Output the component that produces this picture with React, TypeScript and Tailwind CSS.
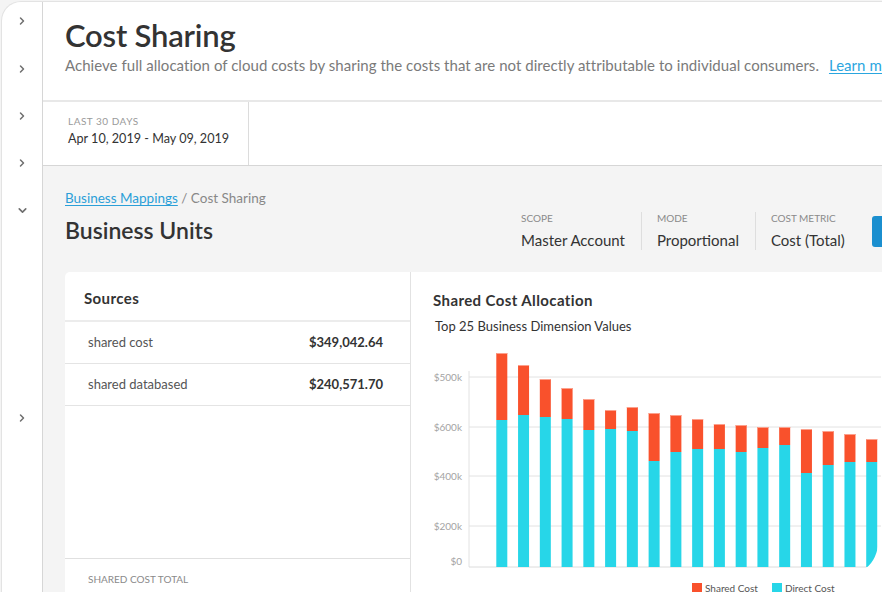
import { ChevronRight, ChevronDown } from "lucide-react";

type Bar = { shared: number; direct: number };

// tops in chart coords (y), bottom is the axis
const bars: Bar[] = [
  { shared: 13, direct: 80 },
  { shared: 25, direct: 75 },
  { shared: 39, direct: 77 },
  { shared: 48, direct: 79 },
  { shared: 59, direct: 90 },
  { shared: 70, direct: 89 },
  { shared: 67, direct: 91 },
  { shared: 73, direct: 121 },
  { shared: 75, direct: 112 },
  { shared: 79, direct: 109 },
  { shared: 84, direct: 109 },
  { shared: 85, direct: 112 },
  { shared: 87, direct: 108 },
  { shared: 87, direct: 105 },
  { shared: 89, direct: 133 },
  { shared: 91, direct: 125 },
  { shared: 94, direct: 122 },
  { shared: 99, direct: 122 },
];

const ticks = [
  { y: 37, label: "$500k" },
  { y: 87, label: "$600k" },
  { y: 136, label: "$400k" },
  { y: 186, label: "$200k" },
];

const AXIS = 227;

const Chart = () => (
  <svg width="470" height="232" className="block">
    {ticks.map((t) => (
      <g key={t.label}>
        <line x1="58" x2="470" y1={t.y} y2={t.y} stroke="#e2e2e2" strokeWidth="1" />
        <text x="51" y={t.y + 3.5} textAnchor="end" fontSize="10" fill="#a3a3a3" fontFamily="Lato, sans-serif">
          {t.label}
        </text>
      </g>
    ))}
    <text x="51" y={225} textAnchor="end" fontSize="10" fill="#a3a3a3" fontFamily="Lato, sans-serif">
      $0
    </text>
    <line x1="58" x2="58" y1="31" y2={AXIS} stroke="#e2e2e2" strokeWidth="1" />
    <line x1="58" x2="470" y1={AXIS} y2={AXIS} stroke="#dcdcdc" strokeWidth="1" />
    {bars.map((b, i) => {
      const x = 85.3 + i * 21.76;
      return (
        <g key={i}>
          <rect x={x} y={b.shared} width="11" height={b.direct - b.shared} fill="#f9512c" />
          <rect x={x} y={b.shared} width="11" height="1" fill="#fca08c" />
          <rect x={x} y={b.direct} width="11" height={AXIS - b.direct} fill="#27d6e8" />
        </g>
      );
    })}
    <path d="M470 196 L468 200 Q466 220 455 228 L470 228 Z" fill="#ffffff" />
  </svg>
);

const SideIcon = ({ down = false, className = "" }: { down?: boolean; className?: string }) => (
  <div className={`flex h-[12px] items-center justify-center text-[#6f6f6f] ${className}`}>
    {down ? <ChevronDown size={13} strokeWidth={3} /> : <ChevronRight size={12} strokeWidth={3} />}
  </div>
);

const Control = ({ label, value, last = false }: { label: string; value: string; last?: boolean }) => (
  <div className={`flex flex-col pl-[15px] pr-[16px] ${last ? "" : "border-r border-[#dedede]"} first:pl-0`}>
    <span className="text-[10px] leading-[12px] uppercase text-[#8a8a8a]">{label}</span>
    <span className="mt-[6px] text-[15px] leading-[20px] text-[#333]">{value}</span>
  </div>
);

export default function App() {
  return (
    <div
      className="w-[882px] h-[592px] overflow-hidden bg-[#f4f4f4] pl-[1px] pt-[1px]"
      style={{ fontFamily: "Lato, 'Open Sans', sans-serif" }}
    >
      <div className="flex h-full w-[1100px] bg-white rounded-tl-[20px] border-l border-t border-[#e3e3e3]">
        {/* sidebar */}
        <div className="w-[41px] shrink-0 border-r border-[#d6d6d6] pt-[13px] flex flex-col">
          <SideIcon />
          <SideIcon className="mt-[36px]" />
          <SideIcon className="mt-[35px]" />
          <SideIcon className="mt-[35px]" />
          <SideIcon down className="mt-[35px]" />
          <SideIcon className="mt-[196px]" />
        </div>

        {/* main */}
        <div className="flex flex-1 flex-col min-w-0">
          <div className="h-[100px] shrink-0 border-b-2 border-[#e8e8e8] pl-[22px] pt-[15px]">
            <h1 className="text-[31px] leading-[36px] font-semibold text-[#333] tracking-[-0.2px]">Cost Sharing</h1>
            <p className="mt-[2px] text-[15px] leading-[20px] tracking-[0.04px] text-[#7a7a7a] whitespace-nowrap">
              Achieve full allocation of cloud costs by sharing the costs that are not directly attributable to
              individual consumers.
              <a className="ml-[10px] text-[#2aa6df] underline underline-offset-2">Learn more</a>
            </p>
          </div>

          <div className="flex h-[64px] shrink-0 border-b border-[#d6d6d6]">
            <div className="w-[206px] border-r border-[#dcdcdc] pl-[25px] pt-[12px]">
              <div className="text-[10px] leading-[14px] tracking-[0.5px] text-[#9a9a9a]">LAST 30 DAYS</div>
              <div className="mt-[2px] text-[12.6px] leading-[18px] text-[#333]">Apr 10, 2019 - May 09, 2019</div>
            </div>
          </div>

          <div className="flex-1 bg-[#f4f4f4] px-[22px] pt-[23px]">
            <div className="text-[13.5px] leading-[18px] text-[#888]">
              <a className="text-[#2a9fd8] underline underline-offset-2">Business Mappings</a> / Cost Sharing
            </div>
            <div className="mt-[2px] flex items-start">
              <h2 className="w-[456px] mt-[7px] text-[23px] leading-[28px] font-semibold text-[#333]">Business Units</h2>
              <div className="mt-[3px] flex items-start">
                <Control label="Scope" value="Master Account" />
                <Control label="Mode" value="Proportional" />
                <Control label="Cost Metric" value="Cost (Total)" last />
                <button className="ml-[11px] mt-[4px] h-[31px] w-[90px] rounded-[3px] bg-[#1b8fcf]" />
              </div>
            </div>

            <div className="mt-[22px] flex h-[340px]">
              <div className="w-[346px] rounded-tl-[5px] border-r border-[#e2e2e2] bg-white flex flex-col">
                <div className="h-[50px] shrink-0 border-b-2 border-[#ececec] pl-[19px] pt-[16px] text-[15px] leading-[20px] font-bold tracking-[0.4px] text-[#333]">
                  Sources
                </div>
                {[
                  ["shared cost", "$349,042.64"],
                  ["shared databased", "$240,571.70"],
                ].map(([name, value]) => (
                  <div
                    key={name}
                    className="flex h-[42px] shrink-0 items-center justify-between border-b border-[#e4e4e4] pl-[23px] pr-[27px] text-[13px]"
                  >
                    <span className="text-[#555]">{name}</span>
                    <span className="font-bold text-[#333]">{value}</span>
                  </div>
                ))}
                <div className="h-[153px] shrink-0 border-b border-[#e0e0e0]" />
                <div className="pl-[23px] pt-[13px] text-[10px] leading-[14px] text-[#8a8a8a]">SHARED COST TOTAL</div>
              </div>

              <div className="w-[560px] bg-white">
                <div className="pl-[22px] pt-[18px]">
                  <div className="text-[15px] leading-[20px] font-bold tracking-[0.4px] text-[#333]">
                    Shared Cost Allocation
                  </div>
                  <div className="mt-[8px] pl-[2px] text-[13px] leading-[16px] text-[#333]">
                    Top 25 Business Dimension Values
                  </div>
                </div>
                <div className="mt-[6px]">
                  <Chart />
                </div>
                <div className="mt-[10px] flex items-center pl-[281px] text-[10px] leading-[12px] text-[#555]">
                  <span className="h-[10px] w-[10px] bg-[#f9512c]" />
                  <span className="ml-[3px]">Shared Cost</span>
                  <span className="ml-[14px] h-[10px] w-[10px] bg-[#27d6e8]" />
                  <span className="ml-[3px]">Direct Cost</span>
                </div>
              </div>
            </div>
          </div>
        </div>
      </div>
    </div>
  );
}
